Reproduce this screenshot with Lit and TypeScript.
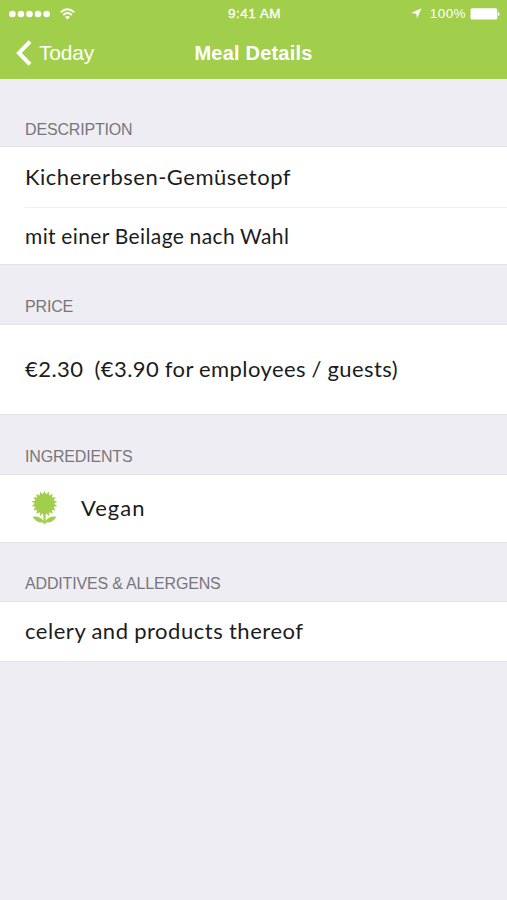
import { LitElement, html, css, svg } from "lit";
import { customElement } from "lit/decorators.js";

const petals = (cx: number, cy: number, outer: number, inner: number, count: number): string => {
  const points: string[] = [];
  for (let i = 0; i < count * 2; i++) {
    const r = i % 2 ? inner : outer;
    const a = -Math.PI / 2 + (i * Math.PI) / count;
    points.push(`${(cx + r * Math.cos(a)).toFixed(2)},${(cy + r * Math.sin(a)).toFixed(2)}`);
  }
  return points.join(" ");
};

@customElement("status-bar")
class StatusBar extends LitElement {
  static styles = css`
    :host {
      display: grid;
      grid-template-columns: 1fr auto 1fr;
      align-items: center;
      height: 27px;
      padding: 0 7px 0 9px;
      color: #fff;
    }
    svg { display: block; fill: #fff; }
    .left, .right { display: flex; align-items: center; }
    .left { gap: 10px; }
    .right { justify-content: flex-end; }
    .time { font-size: 13.5px; letter-spacing: 0.5px; -webkit-text-stroke: 0.3px #fff; }
    .arrow { margin-right: 8px; }
    .percent { font-size: 13.5px; letter-spacing: 0.4px; margin-right: 4px; }
    .wifi { fill: none; stroke: #fff; }
  `;
  render() {
    return html`
      <div class="left">
        <svg width="41" height="8" viewBox="0 0 41 8">
          ${[0, 1, 2, 3, 4].map((i) => svg`<circle cx=${3.4 + i * 8.55} cy="4" r="3.3" />`)}
        </svg>
        <svg class="wifi" width="15" height="12" viewBox="0 0 15 12">
          <path d="M0.7 4.3 Q7.5 -1.9 14.3 4.3" stroke-width="1.8" />
          <path d="M3.2 7 Q7.5 3 11.8 7" stroke-width="1.8" />
          <path d="M7.5 11.5 L5 8.9 Q7.5 6.9 10 8.9 Z" fill="#fff" stroke="none" />
        </svg>
      </div>
      <div class="time">9:41 AM</div>
      <div class="right">
        <svg class="arrow" width="11" height="11" viewBox="0 0 11 11">
          <path d="M10.6 0.3 L6 10.6 L5.3 5.7 L0.2 5 Z" />
        </svg>
        <span class="percent">100%</span>
        <svg width="30" height="12" viewBox="0 0 30 12">
          <rect x="0.5" y="0.3" width="26.8" height="11.2" rx="1.6" />
          <path d="M28 4 Q29.6 4.4 29.6 6 Q29.6 7.6 28 8 Z" />
        </svg>
      </div>
    `;
  }
}

@customElement("nav-bar")
class NavBar extends LitElement {
  static properties = { back: {}, heading: {} };
  declare back: string;
  declare heading: string;
  static styles = css`
    :host {
      display: grid;
      grid-template-columns: 1fr auto 1fr;
      align-items: center;
      height: 52px;
      padding: 0 16px;
      color: #fff;
    }
    .back { display: flex; align-items: center; gap: 7px; font-size: 21px; letter-spacing: -0.2px; }
    .heading { font-size: 20px; font-weight: 700; letter-spacing: 0.2px; }
    svg { display: block; fill: none; stroke: #fff; stroke-width: 4; }
  `;
  render() {
    return html`
      <div class="back">
        <svg width="16" height="26" viewBox="0 0 16 26"><path d="M14 1.6 L2.9 13 L14 24.4" /></svg>
        <span>${this.back}</span>
      </div>
      <div class="heading">${this.heading}</div>
    `;
  }
}

@customElement("detail-section")
class DetailSection extends LitElement {
  static properties = { label: {} };
  declare label: string;
  static styles = css`
    :host { display: flex; flex-direction: column; }
    .label {
      display: flex;
      align-items: flex-end;
      box-sizing: border-box;
      height: var(--label-height, 60px);
      padding: 0 25px var(--label-gap, 8px);
      border-bottom: 1px solid #e3e3e6;
      font-size: 16px;
      line-height: 18px;
      letter-spacing: -0.17px;
      color: #77777b;
    }
    .rows { background: #fff; border-bottom: 1px solid #e5e5e8; }
  `;
  render() {
    return html`
      <div class="label">${this.label}</div>
      <div class="rows"><slot></slot></div>
    `;
  }
}

@customElement("app-root")
class AppRoot extends LitElement {
  static styles = css`
    :host {
      display: block;
      min-height: 900px;
      background: #eeedf3;
      font-family: "Liberation Sans", Arial, sans-serif;
    }
    .top { background: #a1cf4c; }
    .first { --label-height: 68px; --label-gap: 7px; }
    .price { --label-height: 60px; }
    .additives { --label-height: 59px; }
    .row {
      display: flex;
      align-items: center;
      box-sizing: border-box;
      margin-left: 25px;
      font-family: Lato, "Open Sans", sans-serif;
      font-size: 22px;
      color: #1c1c1c;
      white-space: pre;
    }
    .row span { letter-spacing: 0.5px; word-spacing: -0.5px; }
    .name { height: 60px; padding-bottom: 2px; }
    .side { height: 57px; padding-bottom: 2px; border-top: 1px solid #efeff1; font-size: 21px; }
    .cost { height: 89px; padding-bottom: 2px; }
    .diet { height: 67px; padding-bottom: 2px; }
    .allergen { height: 59px; padding-bottom: 2px; }
    .side span { letter-spacing: 0.4px; }
    .cost span { letter-spacing: 0.43px; }
    .diet span { letter-spacing: 1px; }
    .allergen span { letter-spacing: 0.53px; }
    .flower { display: block; fill: #a1cf4c; margin: 0 23px 0 6px; }
  `;
  render() {
    return html`
      <div class="top">
        <status-bar></status-bar>
        <nav-bar back="Today" heading="Meal Details"></nav-bar>
      </div>
      <detail-section class="first" label="DESCRIPTION">
        <div class="row name"><span>Kichererbsen-Gemüsetopf</span></div>
        <div class="row side"><span>mit einer Beilage nach Wahl</span></div>
      </detail-section>
      <detail-section class="price" label="PRICE">
        <div class="row cost"><span>€2.30  (€3.90 for employees / guests)</span></div>
      </detail-section>
      <detail-section label="INGREDIENTS">
        <div class="row diet">
          <svg class="flower" width="27" height="34" viewBox="0 0 27 34">
            <polygon points=${petals(13.5, 12.8, 12.9, 9.7, 18)} />
            <path d="M12.4 22 H14.6 V30 Q17.5 24.6 25.4 25.6 Q22.5 31.8 15.2 31.6 L13.5 33.6 L11.8 31.6 Q4.5 31.8 1.6 25.6 Q9.5 24.6 12.4 30 Z" />
          </svg>
          <span>Vegan</span>
        </div>
      </detail-section>
      <detail-section class="additives" label="ADDITIVES &amp; ALLERGENS">
        <div class="row allergen"><span>celery and products thereof</span></div>
      </detail-section>
    `;
  }
}
